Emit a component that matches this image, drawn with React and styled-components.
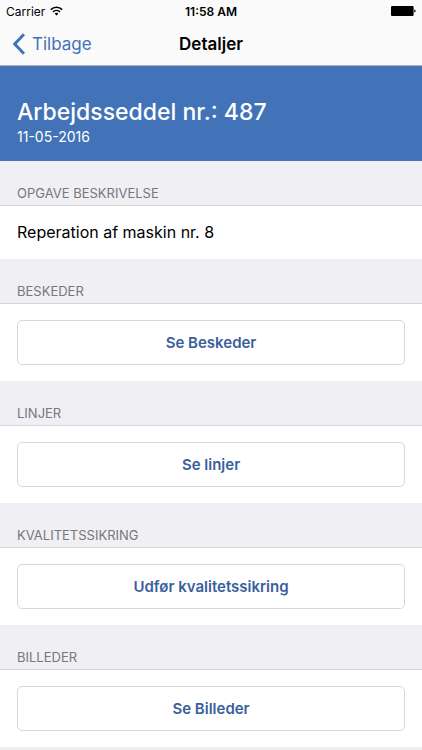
import styled, { createGlobalStyle } from "styled-components";

const GlobalStyle = createGlobalStyle`
  body {
    margin: 0;
    background: #efeff4;
    font-family: Inter, "Liberation Sans", sans-serif;
    color: #000;
  }
`;

const StatusBar = styled.div`
  display: grid;
  grid-template-columns: 1fr auto 1fr;
  align-items: center;
  height: 22px;
  padding: 0 6px;
  background: #fafafa;
  font-size: 12px;
`;

const Carrier = styled.div`
  display: flex;
  align-items: center;
  gap: 5px;
`;

const Clock = styled.div`
  font-weight: 600;
`;

const Battery = styled.svg`
  justify-self: end;
`;

const NavBar = styled.nav`
  display: grid;
  grid-template-columns: 1fr auto 1fr;
  align-items: center;
  height: 43px;
  padding: 0 12px;
  background: #fafafa;
  border-bottom: 1px solid #a9b4c6;
`;

const BackLink = styled.a`
  display: flex;
  align-items: center;
  gap: 7px;
  color: #4272b8;
  font-size: 17px;
  line-height: 22px;
  text-decoration: none;
`;

const NavTitle = styled.h1`
  margin: 0;
  font-size: 17px;
  line-height: 22px;
  font-weight: 600;
`;

const Banner = styled.header`
  padding: 32px 17px 14px;
  background: #4272b8;
  color: #fff;
`;

const BannerTitle = styled.h2`
  margin: 0;
  font-size: 23px;
  line-height: 28px;
  font-weight: 500;
`;

const BannerDate = styled.div`
  font-size: 14px;
  line-height: 21px;
`;

const SectionTitle = styled.h3`
  margin: 0;
  padding: 22px 17px 2px;
  border-bottom: 1px solid #d6d6da;
  background: #efeff4;
  color: #77777c;
  font-size: 13px;
  line-height: 20px;
  font-weight: 400;
  text-transform: uppercase;
`;

const Description = styled.p`
  margin: 0;
  padding: 16px 17px;
  background: #fff;
  font-size: 16px;
  line-height: 21px;
`;

const ButtonCell = styled.div`
  padding: 16px 17px;
  background: #fff;
`;

const ActionButton = styled.button`
  display: block;
  width: 100%;
  height: 45px;
  border: 1px solid #d8d8d8;
  border-radius: 5px;
  background: #fff;
  color: #3a609c;
  font-family: inherit;
  font-size: 15px;
  font-weight: 600;
`;

const sections = [
  { title: "Beskeder", action: "Se Beskeder" },
  { title: "Linjer", action: "Se linjer" },
  { title: "Kvalitetssikring", action: "Udfør kvalitetssikring" },
  { title: "Billeder", action: "Se Billeder" },
];

function App() {
  return (
    <>
      <GlobalStyle />
      <StatusBar>
        <Carrier>
          Carrier
          <svg width="13" height="10" viewBox="0 0 13 10" fill="none" stroke="#000" strokeWidth="1.6">
            <path d="M0.8 3.6a8.2 8.2 0 0 1 11.4 0" />
            <path d="M3 5.9a5 5 0 0 1 7 0" />
            <path d="M6.5 9.6l-1.9-2a2.7 2.7 0 0 1 3.8 0z" fill="#000" stroke="none" />
          </svg>
        </Carrier>
        <Clock>11:58 AM</Clock>
        <Battery width="25" height="10" viewBox="0 0 25 10">
          <rect width="22.6" height="10" rx="1" />
          <path d="M23.3 3.4q1.4 0.2 1.4 1.6t-1.4 1.6z" />
        </Battery>
      </StatusBar>
      <NavBar>
        <BackLink href="#">
          <svg width="13" height="22" viewBox="0 0 13 22" fill="none" stroke="#4272b8" strokeWidth="3">
            <path d="M12 1.2L2.7 11l9.3 9.8" />
          </svg>
          Tilbage
        </BackLink>
        <NavTitle>Detaljer</NavTitle>
      </NavBar>
      <Banner>
        <BannerTitle>Arbejdsseddel nr.: 487</BannerTitle>
        <BannerDate>11-05-2016</BannerDate>
      </Banner>
      <main>
        <SectionTitle>Opgave beskrivelse</SectionTitle>
        <Description>Reperation af maskin nr. 8</Description>
        {sections.map(({ title, action }) => (
          <section key={title}>
            <SectionTitle>{title}</SectionTitle>
            <ButtonCell>
              <ActionButton type="button">{action}</ActionButton>
            </ButtonCell>
          </section>
        ))}
      </main>
    </>
  );
}

export default App;
